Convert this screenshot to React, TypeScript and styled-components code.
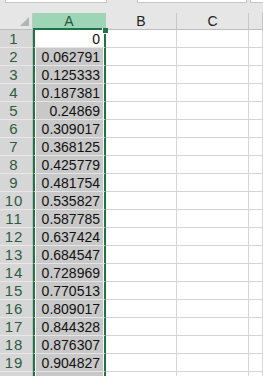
import styled, { createGlobalStyle, css } from 'styled-components';

const values = [
  '0', '0.062791', '0.125333', '0.187381', '0.24869', '0.309017', '0.368125',
  '0.425779', '0.481754', '0.535827', '0.587785', '0.637424', '0.684547',
  '0.728969', '0.770513', '0.809017', '0.844328', '0.876307', '0.904827',
];

const GREEN = '#217346';

const Global = createGlobalStyle`
  html, body { margin: 0; padding: 0; background: #fff; }
  body { font-family: "Liberation Sans", Arial, sans-serif; overflow: hidden; }
`;

const Page = styled.div`
  width: 263px;
  height: 376px;
  overflow: hidden;
  background: #fff;
`;

const TopBar = styled.div`
  height: 13px;
  background: #e6e6e6;
  display: flex;
  align-items: flex-start;
  padding-left: 5px;
  gap: 30px;
`;

const Box = styled.div<{ $w: number }>`
  width: ${(p) => p.$w}px;
  height: 3px;
  background: #fff;
  border: 1px solid #c6c6c6;
  border-top: none;
  box-sizing: border-box;
  flex-shrink: 0;
  &:last-child { margin-left: -27px; }
`;

const Sheet = styled.div`
  display: grid;
  grid-template-columns: 33px 73px 71px 72px 1fr;
  grid-template-rows: 17px repeat(${values.length + 1}, 18px);
`;

const Corner = styled.div`
  background: #e6e6e6;
  border-right: 1px solid #c6c6c6;
  border-bottom: 1px solid #bdbdbd;
  box-sizing: border-box;
  position: relative;
  &::after {
    content: '';
    position: absolute;
    right: 3px;
    bottom: 3px;
    width: 0;
    height: 0;
    border-left: 9px solid transparent;
    border-bottom: 9px solid #b4b4b4;
  }
`;

const ColHead = styled.div<{ $sel?: boolean }>`
  box-sizing: border-box;
  display: flex;
  align-items: center;
  justify-content: center;
  font-size: 14px;
  color: #222;
  background: #e6e6e6;
  border-right: 1px solid #c8c8c8;
  border-bottom: 1px solid #bdbdbd;
  ${(p) =>
    p.$sel &&
    css`
      background: #9fd5b7;
      color: #1d5a37;
      border-right: 1px solid #9fd5b7;
      border-bottom: 2px solid ${GREEN};
    `}
`;

const RowHead = styled.div`
  box-sizing: border-box;
  display: flex;
  align-items: center;
  justify-content: center;
  padding-right: 4px;
  font-size: 15px;
  letter-spacing: 1px;
  color: #2e5c43;
  background: #d6d6d6;
  border-right: 1px solid #bdbdbd;
  border-bottom: 1px solid #e8e8e8;
`;

const SelCell = styled.div<{ $active?: boolean; $first?: boolean }>`
  box-sizing: border-box;
  position: relative;
  display: flex;
  align-items: center;
  justify-content: flex-end;
  padding-right: 4px;
  font-size: 14px;
  color: #111;
  background: ${(p) => (p.$active ? '#fff' : '#c8c8c8')};
  border-left: 2px solid ${GREEN};
  border-right: 2px solid ${GREEN};
  border-bottom: 1px solid #e4e4e4;
  box-shadow: inset 1px 0 0 #fff, inset -1px 0 0 #fff;
  ${(p) =>
    p.$first &&
    css`
      &::after {
        content: '';
        position: absolute;
        right: -4px;
        top: -2px;
        width: 5px;
        height: 5px;
        background: ${GREEN};
        border-left: 1px solid #fff;
        border-bottom: 1px solid #fff;
      }
    `}
`;

const Cell = styled.div`
  box-sizing: border-box;
  border-right: 1px solid #d4d4d4;
  border-bottom: 1px solid #d4d4d4;
  background: #fff;
`;

export default function App() {
  return (
    <Page>
      <Global />
      <TopBar>
        <Box $w={102} />
        <Box $w={110} />
        <Box $w={40} />
      </TopBar>
      <Sheet>
        <Corner />
        <ColHead $sel>A</ColHead>
        <ColHead>B</ColHead>
        <ColHead>C</ColHead>
        <ColHead />
        {values.map((v, i) => (
          <Row key={i} n={i + 1} value={v} />
        ))}
        {/* row 20 peeks in below the window edge */}
        <Row n={0} value="" />
      </Sheet>
    </Page>
  );
}

function Row({ n, value }: { n: number; value: string }) {
  return (
    <>
      <RowHead>{n > 0 ? n : ''}</RowHead>
      <SelCell $active={n === 1} $first={n === 1}>
        {value}
      </SelCell>
      <Cell />
      <Cell />
      <Cell />
    </>
  );
}
